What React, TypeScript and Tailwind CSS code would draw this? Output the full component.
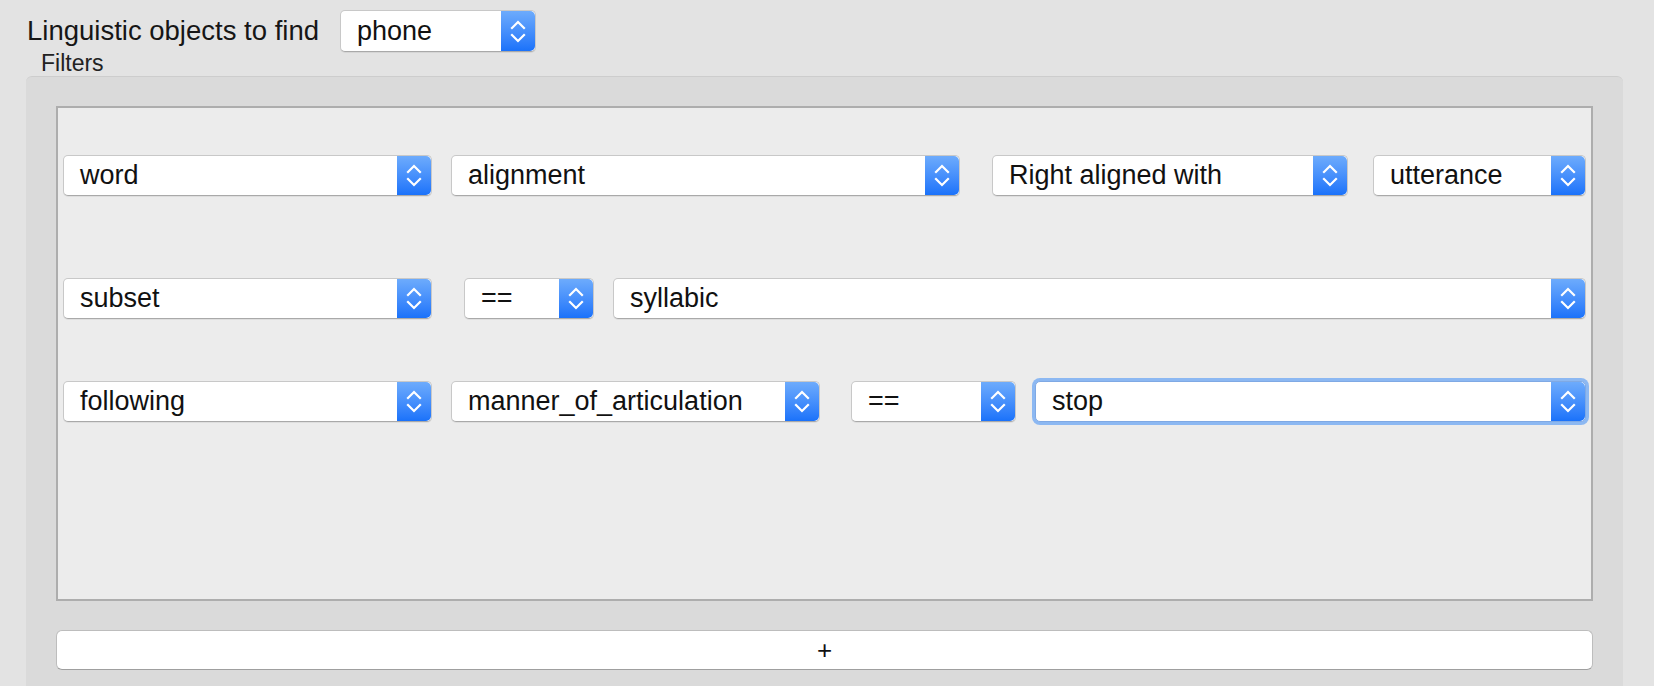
import React from "react";

function Stepper() {
  return (
    <div className="flex h-full w-[34px] shrink-0 items-center justify-center rounded-r-[5px] bg-gradient-to-b from-[#6dabfc] to-[#1a72fa]">
      <svg width="34" height="41" viewBox="0 0 34 41" fill="none">
        <polyline points="11,17 17,11 23,17" stroke="white" strokeWidth="2.2" strokeLinecap="square" strokeLinejoin="miter" />
        <polyline points="11,24 17,30 23,24" stroke="white" strokeWidth="2.2" strokeLinecap="square" strokeLinejoin="miter" />
      </svg>
    </div>
  );
}

function Select({ label, className, focused }: { label: string; className: string; focused?: boolean }) {
  return (
    <div
      className={
        "flex h-[41px] shrink-0 items-stretch rounded-[5px] border bg-white " +
        (focused
          ? "border-[#7fa9e4] shadow-[0_0_0_3px_#8cb8f2] "
          : "border-[#c8c8c8] border-b-[#a9a9a9] shadow-[0_1px_0_rgba(0,0,0,0.06)] ") +
        className
      }
    >
      <div className="flex flex-1 items-center pl-[16px] text-[27px] leading-none text-[#111]">{label}</div>
      <Stepper />
    </div>
  );
}

export default function App() {
  return (
    <div className="flex h-screen w-full flex-col overflow-hidden bg-[#e3e3e3] font-['Liberation_Sans',Arial,sans-serif]">
      <div className="flex items-center pl-[27px] pt-[10px]">
        <span className="w-[313px] text-[27.5px] leading-none text-[#161616]">Linguistic objects to find</span>
        <Select label="phone" className="h-[42px] w-[196px]" />
      </div>
      <div className="h-[23px] pl-[41px] text-[23px] leading-[23px] text-[#222]">Filters</div>
      <div className="ml-[26px] mr-[31px] mt-[1px] flex flex-1 flex-col rounded-t-[6px] border-t border-[#cdcdcd] bg-[#dadada] px-[30px] pt-[29px]">
        <div className="flex h-[495px] flex-col border-2 border-[#adadad] bg-[#ececec] px-[5px] pt-[47px]">
          <div className="flex items-center">
            <Select label="word" className="w-[369px]" />
            <Select label="alignment" className="ml-[19px] w-[509px]" />
            <Select label="Right aligned with" className="ml-[32px] w-[356px]" />
            <Select label="utterance" className="ml-[25px] w-[213px]" />
          </div>
          <div className="mt-[82px] flex items-center">
            <Select label="subset" className="w-[369px]" />
            <Select label="==" className="ml-[32px] w-[130px]" />
            <Select label="syllabic" className="ml-[19px] w-[973px]" />
          </div>
          <div className="mt-[62px] flex items-center">
            <Select label="following" className="w-[369px]" />
            <Select label="manner_of_articulation" className="ml-[19px] w-[369px]" />
            <Select label="==" className="ml-[31px] w-[165px]" />
            <Select label="stop" className="ml-[19px] w-[551px]" focused />
          </div>
        </div>
        <button className="mt-[29px] flex h-[40px] w-full items-center justify-center rounded-[6px] border border-[#bdbdbd] border-b-[#9f9f9f] bg-white text-[26px] leading-none text-[#111]">
          +
        </button>
      </div>
    </div>
  );
}
